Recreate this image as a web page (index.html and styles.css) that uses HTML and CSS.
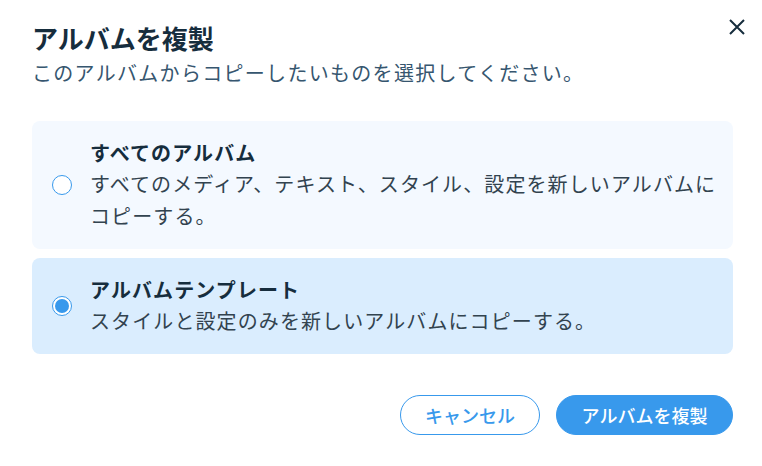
FILE: index.html
```html
<!DOCTYPE html>
<html lang="ja">
  <head>
    <meta charset="UTF-8" />
    <meta name="viewport" content="width=device-width, initial-scale=1.0" />
    <title>アルバムを複製</title>
    <link rel="stylesheet" href="styles.css">
  </head>
  <body>
    <div class="dialog">
      <div class="header">
        <div>
          <h2 class="title">アルバムを複製</h2>
          <p class="subtitle">このアルバムからコピーしたいものを選択してください。</p>
        </div>
        <button class="close" aria-label="閉じる">
          <svg width="18" height="18" viewBox="0 0 18 18">
            <path d="M2 2 L16 16 M16 2 L2 16" stroke="#162d3d" stroke-width="2" fill="none" />
          </svg>
        </button>
      </div>

      <div class="options">
        <label class="option">
          <span class="radio"></span>
          <span class="option-text">
            <span class="option-title">すべてのアルバム</span>
            <span class="option-desc">すべてのメディア、テキスト、スタイル、設定を新しいアルバムにコピーする。</span>
          </span>
        </label>
        <label class="option selected">
          <span class="radio checked"></span>
          <span class="option-text">
            <span class="option-title">アルバムテンプレート</span>
            <span class="option-desc">スタイルと設定のみを新しいアルバムにコピーする。</span>
          </span>
        </label>
      </div>

      <div class="actions">
        <button class="btn btn-outline">キャンセル</button>
        <button class="btn btn-primary">アルバムを複製</button>
      </div>
    </div>
  </body>
</html>
```

FILE: styles.css
```css
body {
  font-family: "Noto Sans CJK JP", "Noto Sans", sans-serif;
  background-color: #fff;
  margin: 0;
  padding: 0;
  color: #162d3d;
}
.dialog {
  width: 762px;
  height: 466px;
  box-sizing: border-box;
  padding: 21px 29px 0 32px;
}
.header {
  display: flex;
  justify-content: space-between;
  align-items: flex-start;
}
.title {
  margin: 0;
  font-size: 26px;
  line-height: 34px;
  font-weight: bold;
  color: #162d3d;
}
.subtitle {
  margin: 3px 0 0;
  font-size: 20px;
  line-height: 30px;
  letter-spacing: 1.3px;
  color: #36566f;
}
.close {
  border: none;
  background: none;
  padding: 0;
  margin: -3px -13px 0 0;
  width: 18px;
  height: 18px;
  cursor: pointer;
}
.options {
  margin-top: 33px;
  display: flex;
  flex-direction: column;
  gap: 9px;
}
.option {
  display: flex;
  align-items: center;
  gap: 18px;
  padding: 17px 8px 17px 20px;
  border-radius: 8px;
  background-color: #f4f9ff;
  cursor: pointer;
}
.option.selected {
  background-color: #daedfe;
}
.radio {
  flex: none;
  width: 20px;
  height: 20px;
  box-sizing: border-box;
  border: 1px solid #3899ec;
  border-radius: 50%;
  background: #fff;
  position: relative;
}
.radio.checked::after {
  content: "";
  position: absolute;
  left: 2px;
  top: 2px;
  width: 14px;
  height: 14px;
  border-radius: 50%;
  background: #3899ec;
}
.option-text {
  display: flex;
  flex-direction: column;
}
.option-title {
  font-size: 20px;
  line-height: 30px;
  font-weight: bold;
  letter-spacing: 1.1px;
  color: #162d3d;
}
.option-desc {
  font-size: 20px;
  line-height: 32px;
  letter-spacing: 1.1px;
  color: #32434f;
}
.actions {
  margin-top: 41px;
  display: flex;
  justify-content: flex-end;
  gap: 16px;
}
.btn {
  height: 40px;
  border-radius: 20px;
  font-family: inherit;
  font-size: 18px;
  font-weight: 500;
  padding: 0 20px;
  cursor: pointer;
}
.btn-outline {
  width: 140px;
  background: #fff;
  border: 1px solid #3899ec;
  color: #3899ec;
}
.btn-primary {
  width: 177px;
  background: #3899ec;
  border: 1px solid #3899ec;
  color: #fff;
}
```
